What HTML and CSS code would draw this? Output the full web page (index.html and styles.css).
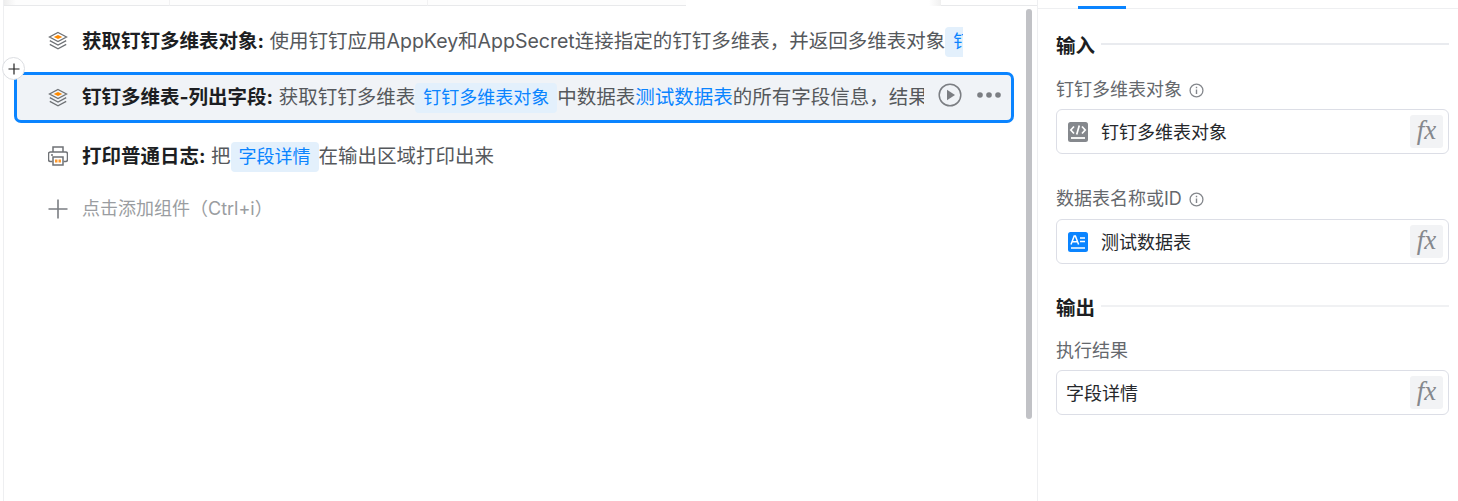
FILE: index.html
```html
<!DOCTYPE html>
<html>
<head>
  <title>钉钉多维表-列出字段</title>
  <link rel="stylesheet" href="styles.css">
</head>
<body>
  <div class="page">
    <div class="flow">
      <div class="flow-top">
        <div class="top-tab top-tab-first"></div>
        <div class="top-tab"></div>
        <div class="top-tab"></div>
        <div class="top-gap"></div>
        <div class="top-end"></div>
      </div>
      <div class="flow-body">
        <div class="step-list">
          <div class="step">
            <svg class="step-icon" viewBox="0 0 20 20"><path d="M10 1.500 18.500 6l-8.500 4.500L1.500 6z" fill="none" stroke="#6f7276" stroke-width="1.300"/><path d="M10 4.100 14.300 6l-4.300 2L5.700 6z" fill="#ff8a00"/><path d="M1.800 9.700 10 14l8.200-4.300M1.800 13.400 10 17.800l8.200-4.400" fill="none" stroke="#6f7276" stroke-width="1.300"/></svg>
            <div class="step-text step-text-first"><b>获取钉钉多维表对象:</b> 使用钉钉应用AppKey和AppSecret连接指定的钉钉多维表，并返回多维表对象<span class="tag">钉钉多维表对象</span></div>
          </div>
          <div class="step step-active">
            <span class="add-btn">
              <svg viewBox="0 0 12 12"><path d="M6 0.500v11M0.500 6h11" stroke="#222" stroke-width="1.200"/></svg>
            </span>
            <svg class="step-icon" viewBox="0 0 20 20"><path d="M10 1.500 18.500 6l-8.500 4.500L1.500 6z" fill="none" stroke="#6f7276" stroke-width="1.300"/><path d="M10 4.100 14.300 6l-4.300 2L5.700 6z" fill="#ff8a00"/><path d="M1.800 9.700 10 14l8.200-4.300M1.800 13.400 10 17.800l8.200-4.400" fill="none" stroke="#6f7276" stroke-width="1.300"/></svg>
            <div class="step-text step-text-second"><b>钉钉多维表-列出字段:</b> 获取钉钉多维表<span class="tag">钉钉多维表对象</span>中数据表<span class="link">测试数据表</span>的所有字段信息，结果保存到字段详情</div>
            <div class="step-actions">
              <svg class="play" viewBox="0 0 24 24"><circle cx="12" cy="12" r="10.800" fill="none" stroke="#7b7e83" stroke-width="1.500"/><path d="M9 6.800v10.400l8-5.200z" fill="#7b7e83"/></svg>
              <svg class="more" viewBox="0 0 24 6"><circle cx="3" cy="3" r="2.800" fill="#7b7e83"/><circle cx="12" cy="3" r="2.800" fill="#7b7e83"/><circle cx="21" cy="3" r="2.800" fill="#7b7e83"/></svg>
            </div>
          </div>
          <div class="step">
            <svg class="step-icon" viewBox="0 0 20 20"><path d="M5 6V1h10v5" fill="none" stroke="#6f7276" stroke-width="1.500"/><path d="M4.500 15.500H2.500a2 2 0 0 1-2-2V8a2 2 0 0 1 2-2h15a2 2 0 0 1 2 2v5.500a2 2 0 0 1-2 2h-2" fill="none" stroke="#6f7276" stroke-width="1.500"/><path d="M3 9h2" stroke="#6f7276" stroke-width="1.500"/><path d="M5 11h10v8H5z" fill="#fff" stroke="#6f7276" stroke-width="1.500"/><path d="M7 13.500h2.500v3H7zM10.500 13.500H13v3h-2.500z" fill="#ff9a2e"/></svg>
            <div class="step-text"><b>打印普通日志:</b> 把<span class="tag">字段详情</span>在输出区域打印出来</div>
          </div>
          <div class="step step-new">
            <svg class="step-icon" viewBox="0 0 20 20"><path d="M10 0.500v19M0.500 10h19" stroke="#7b7e83" stroke-width="1.600"/></svg>
            <div class="step-text">点击添加组件（Ctrl+i）</div>
          </div>
        </div>
        <div class="scroll-track"><div class="scroll-thumb"></div></div>
      </div>
    </div>

    <div class="side">
      <div class="side-tabs"><span class="tab-line"></span></div>
      <div class="side-body">
        <div class="section-title first">输入</div>
        <div class="field">
          <div class="field-label">钉钉多维表对象
            <svg class="info" viewBox="0 0 14 14"><circle cx="7" cy="7" r="6" fill="none" stroke="#84878c" stroke-width="1.200"/><path d="M7 6v4.200M7 3.500v1.300" stroke="#84878c" stroke-width="1.300"/></svg>
          </div>
          <div class="input">
            <svg class="input-icon" viewBox="0 0 20 20"><rect width="20" height="20" rx="2.500" fill="#85888d"/><path d="M6 4.500 2.800 8 6 11.500M14 4.500 17.200 8 14 11.500M11.300 3.500 8.700 12.500" fill="none" stroke="#fff" stroke-width="1.700"/><path d="M3 16h14" stroke="#fff" stroke-width="1.800"/></svg>
            <span class="input-value">钉钉多维表对象</span>
            <span class="fx">fx</span>
          </div>
        </div>
        <div class="field">
          <div class="field-label">数据表名称或ID
            <svg class="info" viewBox="0 0 14 14"><circle cx="7" cy="7" r="6" fill="none" stroke="#84878c" stroke-width="1.200"/><path d="M7 6v4.200M7 3.500v1.300" stroke="#84878c" stroke-width="1.300"/></svg>
          </div>
          <div class="input">
            <svg class="input-icon" viewBox="0 0 20 20"><rect width="20" height="20" rx="2.500" fill="#0a84ff"/><path d="M3 12.500 6.200 4h1.200l3.200 8.500M4.300 9.800h5" fill="none" stroke="#fff" stroke-width="1.500"/><path d="M12 6h5M12 9.500h5M3 16h14" stroke="#fff" stroke-width="1.500"/></svg>
            <span class="input-value">测试数据表</span>
            <span class="fx">fx</span>
          </div>
        </div>
        <div class="section-title section-output">输出</div>
        <div class="field">
          <div class="field-label">执行结果</div>
          <div class="input input-plain">
            <span class="input-value">字段详情</span>
            <span class="fx">fx</span>
          </div>
        </div>
      </div>
    </div>
  </div>
</body>
</html>
```
FILE: styles.css
```css
:root {
  --primary-color: #0a84ff;
  --tag-bg: #e3f0fc;
  --line-color: #e9ebef;
  --text-color: #55585c;
  --dark-color: #1c1e22;
}

html, body {
  margin: 0;
  padding: 0;
  background: #fff;
  overflow: hidden;
}

body {
  font-family: "Inter", "Noto Sans CJK SC", sans-serif;
  color: var(--text-color);
}

.page {
  display: flex;
  width: 1458px;
  height: 501px;
}

/* left panel */
.flow {
  width: 1033px;
  margin-left: 3px;
  border-left: 1px solid #eeeff1;
  display: flex;
  flex-direction: column;
}

.flow-top {
  height: 6px;
  display: flex;
  flex: none;
}

.top-tab {
  width: 258px;
  box-sizing: border-box;
  border-bottom: 1px solid #e8e9eb;
  border-right: 1px solid #f2f2f3;
  background: #fdfdfd;
}

.top-tab:nth-child(3) {
  border-right: none;
}

.top-tab-first {
  width: 166px;
  background: linear-gradient(to right, #eeeeee, #fdfdfd 12px);
}

.top-gap {
  flex: 1;
  background: linear-gradient(to left, #f0f0f0, #fff 12px);
}

.top-end {
  width: 96px;
  box-sizing: border-box;
  border-bottom: 1px solid #e8e9eb;
}

.flow-body {
  flex: 1;
  display: flex;
  position: relative;
}

.step-list {
  width: 1000px;
  margin-left: 10px;
  padding-top: 9px;
  display: flex;
  flex-direction: column;
}

.step {
  height: 52px;
  display: flex;
  align-items: center;
  padding-left: 34px;
  font-size: 19.5px;
  line-height: 30px;
  position: relative;
  box-sizing: border-box;
}

.step-active {
  height: 51px;
  margin: 5px 0 7px;
  background: #f0f3f7;
  border: 3px solid var(--primary-color);
  border-radius: 7px;
  padding-left: 31px;
}

.step-new {
  color: #9a9da1;
  padding-top: 2px;
}

.step-new .step-text {
  font-size: 18px;
}

.step-icon {
  width: 20px;
  height: 20px;
  flex: none;
  margin-right: 14px;
}

.step-text {
  width: 843px;
  flex: none;
  white-space: nowrap;
  overflow: hidden;
}

.step-text-first {
  width: 881px;
}

.step-text-second {
  width: 842px;
  margin-right: 1px;
}

.step-text b {
  color: var(--dark-color);
  font-weight: 700;
}

.tag {
  display: inline-block;
  line-height: 30px;
  padding: 0 8px;
  background: var(--tag-bg);
  color: var(--primary-color);
  border-radius: 4px;
  font-size: 18px;
}

.link {
  color: var(--primary-color);
}

.step-actions {
  display: flex;
  align-items: center;
  margin-left: 13px;
  margin-bottom: 5px;
}

.play {
  width: 24px;
  height: 24px;
}

.more {
  width: 24px;
  height: 6px;
  margin-left: 15px;
}

.add-btn {
  position: absolute;
  left: -15px;
  top: -18px;
  width: 21px;
  height: 21px;
  border: 1px solid #dcdee2;
  border-radius: 50%;
  background: #fff;
  display: flex;
  align-items: center;
  justify-content: center;
}

.add-btn svg {
  width: 12px;
  height: 12px;
}

.scroll-track {
  position: absolute;
  left: 1022px;
  top: 3px;
  width: 6px;
  height: 410px;
}

.scroll-thumb {
  height: 100%;
  background: #c1c2c6;
  border-radius: 3px;
}

/* right panel */
.side {
  width: 421px;
  border-left: 1px solid #eeeff1;
  flex: none;
  box-sizing: border-box;
}

.side-tabs {
  height: 9px;
  box-sizing: border-box;
  border-bottom: 1px solid #eeeff1;
  padding: 6px 0 0 40px;
}

.tab-line {
  display: block;
  width: 48px;
  height: 3px;
  background: var(--primary-color);
}

.side-body {
  padding: 0 9px 0 18px;
}

.section-title {
  display: flex;
  align-items: center;
  gap: 6px;
  font-size: 19.5px;
  font-weight: 700;
  line-height: 26px;
  color: var(--dark-color);
  margin-top: 31px;
}

.section-title.first {
  margin-top: 24px;
}

.section-title::after {
  content: "";
  flex: 1;
  height: 2px;
  background: var(--line-color);
  margin-bottom: 4px;
}

.section-output::after {
  background: #f0f1f3;
}

.field {
  margin-top: 32px;
}

.section-title + .field {
  margin-top: 18px;
}

.section-output + .field {
  margin-top: 17px;
}

.field-label {
  display: flex;
  align-items: center;
  gap: 7px;
  font-size: 18px;
  line-height: 26px;
  color: #65686d;
}

.info {
  width: 15px;
  height: 15px;
}

.input {
  margin-top: 7px;
  height: 45px;
  border: 1px solid #dcdee6;
  border-radius: 6px;
  box-sizing: border-box;
  display: flex;
  align-items: center;
  padding: 0 5px 0 11px;
}

.section-title + .field .input {
  margin-top: 6px;
}

.input-plain {
  padding-left: 9px;
}

.input-icon {
  width: 20px;
  height: 20px;
  flex: none;
  margin-right: 13px;
}

.input-value {
  flex: 1;
  font-size: 18px;
  color: #26282c;
  padding-bottom: 2px;
}

.fx {
  width: 33px;
  height: 33px;
  background: #f2f3f5;
  border-radius: 3px;
  text-align: center;
  font-family: "Liberation Serif", serif;
  font-style: italic;
  font-size: 27px;
  line-height: 31px;
  color: #85888d;
}
```
